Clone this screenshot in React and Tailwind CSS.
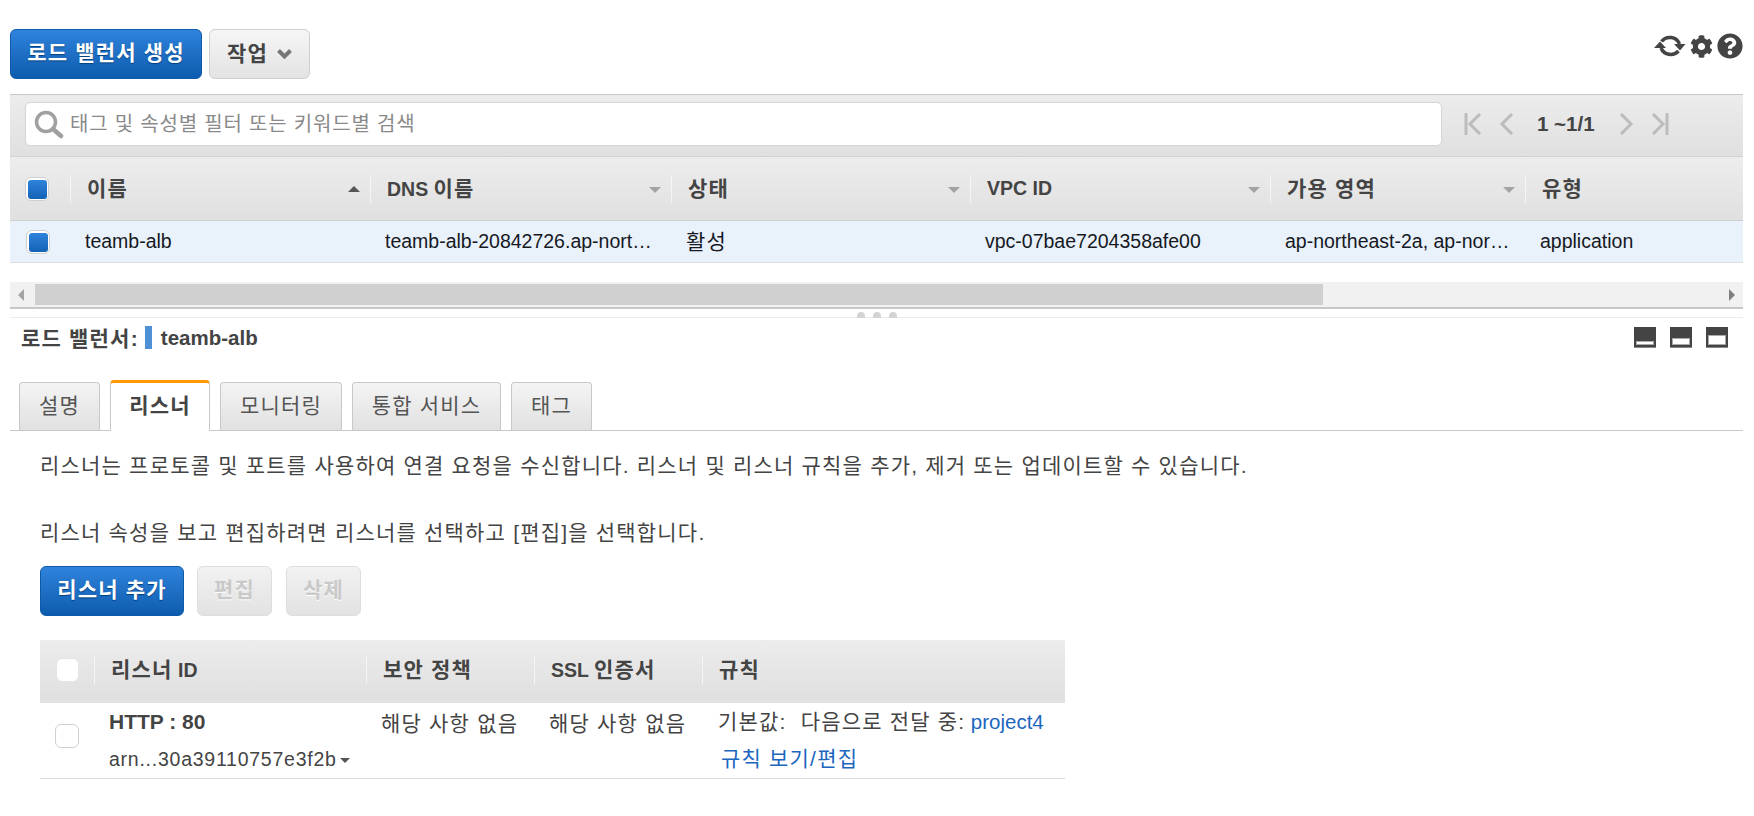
import React from 'react';
import { FaCog, FaQuestionCircle } from 'react-icons/fa';

const font = "font-['Liberation_Sans','Noto_Sans_CJK_KR',sans-serif]";
const topCols = 'grid grid-cols-[60px_300px_301px_299px_300px_255px_218px]';
const subCols = 'grid grid-cols-[54px_272px_168px_168px_363px]';

const Ko = ({ className = '', children }) => (
  <span className={`text-[21px] tracking-[1.2px] ${className}`}>{children}</span>
);

const BlueButton = ({ className, children }) => (
  <button className={`rounded-[6px] border border-[#0c5aa8] bg-gradient-to-b from-[#2f83dc] to-[#0b5cae] pb-[2px] font-bold text-white [text-shadow:0_1px_1px_#063f7a] ${className}`}>
    {children}
  </button>
);

const Box = ({ checked, className = '' }) => (
  <span className={`flex h-6 w-[24px] items-end justify-end rounded-[6px] border border-[#cfcfcf] bg-white pb-px pr-px ${className}`}>
    {checked && <span className="h-[19px] w-[19px] rounded-[3px] bg-gradient-to-b from-[#2f83dc] to-[#1262b5]"></span>}
  </span>
);

const Head = ({ children, sort }) => (
  <div className="relative flex h-full items-center">
    <div className="flex h-[28px] flex-1 items-center border-l border-[#f5f5f5] pl-[16px] text-[19.5px] font-bold text-[#444]">
      <span>{children}</span>
    </div>
    {sort === 'up' && <span className="absolute right-[10px] top-[29px] h-0 w-0 border-x-[6px] border-b-[6px] border-x-transparent border-b-[#555]"></span>}
    {sort === 'down' && <span className="absolute right-[10px] top-[30px] h-0 w-0 border-x-[6px] border-t-[6px] border-x-transparent border-t-[#a3a3a3]"></span>}
  </div>
);

const Pager = ({ d }) => (
  <svg width="18" height="22" viewBox="0 0 18 22" fill="none" stroke="#bcbcbc" strokeWidth="3">
    <path d={d} />
  </svg>
);

const Layout = ({ h }) => (
  <span className="flex h-[21px] w-[22px] items-end justify-center border-b border-[#888] bg-[#444] pb-[2px]">
    <span className={`w-[18px] border border-[#aaa] bg-white ${h}`}></span>
  </span>
);

const Tab = ({ active, className = '', children }) =>
  active ? (
    <div className={`relative z-10 -mb-px flex h-[51px] items-center justify-center rounded-t-[4px] border-x border-t-[3px] border-[#c8c8c8] border-t-[#f90] bg-white pb-[2px] font-bold text-[#444] ${className}`}>
      <Ko>{children}</Ko>
    </div>
  ) : (
    <div className={`flex h-[48px] items-center justify-center rounded-t-[4px] border border-b-0 border-[#c8c8c8] bg-gradient-to-b from-[#f4f4f4] to-[#e1e1e1] pb-[2px] text-[#555] ${className}`}>
      <Ko>{children}</Ko>
    </div>
  );

export default function App() {
  return (
    <div className={`${font} h-[816px] overflow-hidden bg-white pl-[10px] pr-[11px] text-[19.5px] text-[#444]`}>
      {/* top toolbar */}
      <div className="flex h-[94px] items-start pt-[29px]">
        <BlueButton className="h-[50px] w-[192px]"><Ko>로드 밸런서 생성</Ko></BlueButton>
        <button className="ml-[7px] flex h-[50px] w-[101px] items-center justify-center gap-[9px] rounded-[6px] border border-[#cfcfcf] bg-gradient-to-b from-[#f6f6f6] to-[#e3e3e3] font-bold text-[#444]">
          <Ko>작업</Ko>
          <svg width="15" height="10" viewBox="0 0 15 10" fill="none" stroke="#777" strokeWidth="4"><path d="M1.500 1.500 7.500 7.500 13.500 1.500" /></svg>
        </button>
        <div className="ml-auto flex items-center gap-[4px] pt-[3px] text-[#444]">
          <svg width="32" height="28" viewBox="0 0 32 28" fill="none" stroke="#444" strokeWidth="3.5">
            <path d="M7.500 9.500A10.500 10.500 0 0 1 25.500 12" />
            <path d="M7 16A10.500 10.500 0 0 0 24.500 19" />
            <path d="M20 12h11.500L26 18.500z" fill="#444" stroke="none" />
            <path d="M0 16h12L6 9.500z" fill="#444" stroke="none" />
          </svg>
          <FaCog size={23} />
          <FaQuestionCircle size={26} />
        </div>
      </div>

      {/* load balancer table */}
      <div className="flex h-[63px] items-center border-y border-t-[#c8c8c8] border-b-[#d2d2d2] bg-gradient-to-b from-[#ececec] to-[#e0e0e0] pb-[3px] pl-[15px]">
        <div className="flex h-[44px] w-[1417px] items-center rounded-[5px] border border-[#d5d5d5] bg-white pl-[8px]">
          <svg width="30" height="30" viewBox="0 0 30 30" fill="none" stroke="#a0a0a0">
            <circle cx="12" cy="13" r="9.500" strokeWidth="3.500" />
            <path d="M19 20 27 27" strokeWidth="4.500" strokeLinecap="round" />
          </svg>
          <span className="ml-[6px] text-[20px] tracking-[0.800px] text-[#8a8a8a]">태그 및 속성별 필터 또는 키워드별 검색</span>
        </div>
        <div className="ml-[22px] flex items-center font-bold">
          <Pager d="M2 0v22M16 1 6 11l10 10" />
          <span className="ml-[16px]"><Pager d="M14 1 4 11l10 10" /></span>
          <span className="ml-[21px] w-[68px] text-[20.500px] text-[#444]">1 ~1/1</span>
          <span className="ml-[12px]"><Pager d="M4 1l10 10L4 21" /></span>
          <span className="ml-[16px]"><Pager d="M2 1l10 10L2 21M16 0v22" /></span>
        </div>
      </div>
      <div className={`${topCols} h-[64px] items-center border-b border-[#cfcfcf] bg-gradient-to-b from-[#ededed] to-[#e0e0e0]`}>
        <div className="pl-[15px]"><Box checked /></div>
        <Head sort="up"><Ko>이름</Ko></Head>
        <Head sort="down">DNS <Ko>이름</Ko></Head>
        <Head sort="down"><Ko>상태</Ko></Head>
        <Head sort="down">VPC ID</Head>
        <Head sort="down"><Ko>가용 영역</Ko></Head>
        <Head><Ko>유형</Ko></Head>
      </div>
      <div className={`${topCols} h-[42px] items-center border-b border-[#dcdcdc] bg-[#e9f1fb] text-[#16191f]`}>
        <div className="pl-[16px]"><Box checked /></div>
        <div className="pl-[15px]">teamb-alb</div>
        <div className="truncate pl-[15px] pr-[14px]">teamb-alb-20842726.ap-northeast-2.elb.amazonaws.com</div>
        <div className="pl-[15px]"><Ko>활성</Ko></div>
        <div className="pl-[15px]">vpc-07bae7204358afe00</div>
        <div className="truncate pl-[15px] pr-[14px]">ap-northeast-2a, ap-northeast-2c</div>
        <div className="pl-[15px]">application</div>
      </div>

      {/* horizontal scrollbar */}
      <div className="mt-[19px] flex h-[25px] items-center bg-[#f1f1f1]">
        <span className="ml-[8px] h-0 w-0 border-y-[6px] border-r-[6px] border-y-transparent border-r-[#a3a3a3]"></span>
        <div className="ml-[11px] h-[21px] w-[1288px] bg-[#d0d0d0]"></div>
        <span className="ml-auto mr-[8px] h-0 w-0 border-y-[6px] border-l-[6px] border-y-transparent border-l-[#7f7f7f]"></span>
      </div>
      <div className="relative h-[11px] border-y border-t-2 border-t-[#c8c8c8] border-b-[#ececec]">
        <div className="absolute left-[847px] top-[3px] flex gap-[8px]">
          <span className="h-[6px] w-[8px] rounded-t-full bg-[#d4d4d4]"></span>
          <span className="h-[6px] w-[8px] rounded-t-full bg-[#d4d4d4]"></span>
          <span className="h-[6px] w-[8px] rounded-t-full bg-[#d4d4d4]"></span>
        </div>
      </div>

      {/* details panel */}
      <div className="flex h-[63px] items-start pl-[11px] pr-[15px] pt-[5px]">
        <span className="font-bold"><Ko>로드 밸런서:</Ko></span>
        <span className="ml-[6px] mt-[3px] h-[23px] w-[7px] bg-[#4f91d4]"></span>
        <span className="ml-[9px] text-[20.500px] font-bold">teamb-alb</span>
        <div className="ml-auto flex gap-[14px] pt-[4px]">
          <Layout h="h-[4px]" />
          <Layout h="h-[7px]" />
          <Layout h="h-[10px]" />
        </div>
      </div>

      <div className="flex h-[50px] items-end gap-[10px] border-b border-[#c8c8c8] pl-[9px]">
        <Tab className="w-[81px]">설명</Tab>
        <Tab active className="w-[100px]">리스너</Tab>
        <Tab className="w-[122px]">모니터링</Tab>
        <Tab className="w-[149px]">통합 서비스</Tab>
        <Tab className="w-[81px]">태그</Tab>
      </div>

      <div className="pl-[30px]">
        <p className="mt-[22px] whitespace-nowrap leading-[26px]"><Ko>리스너는 프로토콜 및 포트를 사용하여 연결 요청을 수신합니다. 리스너 및 리스너 규칙을 추가, 제거 또는 업데이트할 수 있습니다.</Ko></p>
        <p className="mt-[41px] whitespace-nowrap leading-[26px]"><Ko>리스너 속성을 보고 편집하려면 리스너를 선택하고 [편집]을 선택합니다.</Ko></p>

        <div className="mt-[20px] flex items-center">
          <BlueButton className="h-[50px] w-[144px]"><Ko>리스너 추가</Ko></BlueButton>
          <button className="ml-[13px] h-[50px] w-[75px] rounded-[6px] border border-[#dedede] bg-gradient-to-b from-[#f2f2f2] to-[#e2e2e2] pb-[2px] font-bold text-[#c9c9c9] [text-shadow:0_1px_0_#fff]"><Ko>편집</Ko></button>
          <button className="ml-[14px] h-[50px] w-[75px] rounded-[6px] border border-[#dedede] bg-gradient-to-b from-[#f2f2f2] to-[#e2e2e2] pb-[2px] font-bold text-[#c9c9c9] [text-shadow:0_1px_0_#fff]"><Ko>삭제</Ko></button>
        </div>

        <div className="mt-[24px] w-[1025px]">
          <div className={`${subCols} h-[63px] items-center border-b-[3px] border-[#e2e2e2] bg-gradient-to-b from-[#ececec] to-[#e0e0e0]`}>
            <div className="pl-[16px]"><span className="block h-6 w-[23px] rounded-[6px] border border-[#e4e4e4] bg-white"></span></div>
            <Head><Ko>리스너</Ko> ID</Head>
            <Head><Ko>보안 정책</Ko></Head>
            <Head>SSL <Ko>인증서</Ko></Head>
            <Head><Ko>규칙</Ko></Head>
          </div>
          <div className={`${subCols} h-[76px] border-b border-[#dcdcdc]`}>
            <div className="pl-[15px] pt-[21px]"><Box /></div>
            <div className="pl-[15px] pt-[6px]">
              <div className="text-[21px] font-bold leading-[26px]">HTTP : 80</div>
              <div className="mt-[11px] flex items-center leading-[26px] tracking-[0.750px]">
                arn...30a39110757e3f2b
                <span className="ml-[3px] mt-[2px] h-0 w-0 border-x-[5px] border-t-[5px] border-x-transparent border-t-[#555]"></span>
              </div>
            </div>
            <div className="pl-[15px] pt-[8px] leading-[26px]"><Ko>해당 사항 없음</Ko></div>
            <div className="pl-[15px] pt-[8px] leading-[26px]"><Ko>해당 사항 없음</Ko></div>
            <div className="whitespace-nowrap pl-[16px] pt-[6px] leading-[26px]">
              <div><Ko>기본값:&nbsp; 다음으로 전달 중:</Ko> <a className="text-[20.500px] text-[#1d66c0]">project4</a></div>
              <a className="mt-[11px] block pl-[3px] text-[#1d66c0]"><Ko>규칙 보기/편집</Ko></a>
            </div>
          </div>
        </div>
      </div>
    </div>
  );
}
